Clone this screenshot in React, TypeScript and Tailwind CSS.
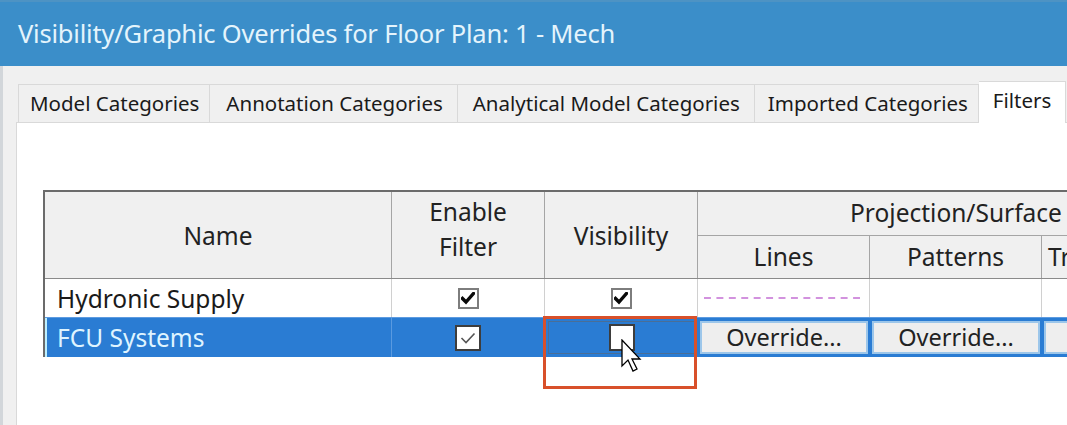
import React from "react";

function Check({ bold }: { bold?: boolean }) {
  if (bold) {
    return (
      <svg width="14" height="13" viewBox="0 0 14 13">
        <path d="M1.5 6.5 L5 10 L12.5 1.5" fill="none" stroke="#0a0a0a" strokeWidth="3.4" strokeLinejoin="miter" strokeLinecap="square" />
      </svg>
    );
  }
  return (
    <svg width="16" height="12" viewBox="0 0 16 12">
      <path d="M1.5 6 L6 10.5 L14.5 1.5" fill="none" stroke="#555" strokeWidth="1.6" />
    </svg>
  );
}

function SmallBox() {
  return (
    <div className="w-[21px] h-[21px] border-2 border-[#7d7d7d] bg-white flex items-center justify-center">
      <Check bold />
    </div>
  );
}

export default function App() {
  return (
    <div className="relative w-[1067px] h-[425px] overflow-hidden bg-[#f0f0f0] font-['Noto_Sans',sans-serif] text-[#1a1a1a]">
      {/* Title bar */}
      <div className="h-[66px] bg-[#3b8ec9] border-t-2 border-[#4d93c4] flex items-center pl-[18px] pb-[2px] text-[25.5px] text-[#e4f4fc] tracking-[-0.2px] whitespace-nowrap">
        Visibility/Graphic Overrides for Floor Plan: 1 - Mech
      </div>

      {/* Body */}
      <div className="border-l-[3px] border-[#d2d6da] h-[359px] pl-[13px] pt-[15px]">
        {/* Tabs */}
        <div className="flex items-end h-[41px] pl-[2px] text-[20.5px] whitespace-nowrap">
          <div className="h-[38px] pl-[11px] pr-[10px] flex items-center bg-[#f0f0f0] border border-b-0 border-[#d9d9d9]">Model Categories</div>
          <div className="h-[38px] pl-[16px] pr-[14px] flex items-center bg-[#f0f0f0] border border-l-0 border-b-0 border-[#d9d9d9]">Annotation Categories</div>
          <div className="h-[38px] pl-[15px] pr-[14px] flex items-center bg-[#f0f0f0] border border-l-0 border-b-0 border-[#d9d9d9]">Analytical Model Categories</div>
          <div className="h-[38px] pl-[13px] pr-[10px] flex items-center bg-[#f0f0f0] border border-l-0 border-b-0 border-[#d9d9d9]">Imported Categories</div>
          <div className="h-[42px] -mb-px relative z-10 px-[14px] pb-[4px] flex items-center bg-white border border-l-0 border-b-0 border-[#d9d9d9]">Filters</div>
        </div>

        {/* Panel */}
        <div className="bg-white border-l border-t border-[#d9d9d9] h-[320px] pl-[26px] pt-[67px]">
          <div className="w-max border-l-2 border-t-2 border-[#6b6b6b] text-[24.5px] whitespace-nowrap">
            {/* Header */}
            <div className="flex h-[87px] bg-[#f0f0f0] border-b border-[#8a8a8a] text-[#222]">
              <div className="w-[347px] border-r border-[#a5a5a5] flex items-center justify-center pt-[3px]">Name</div>
              <div className="w-[153px] border-r border-[#a5a5a5] flex flex-col items-center justify-center leading-[35px] pb-[12px]">
                <span>Enable</span>
                <span>Filter</span>
              </div>
              <div className="w-[153px] border-r border-[#a5a5a5] flex items-center justify-center pt-[3px]">Visibility</div>
              <div className="flex flex-col w-[516px]">
                <div className="h-[44px] border-b border-[#a5a5a5] flex items-center justify-center">Projection/Surface</div>
                <div className="flex flex-1">
                  <div className="w-[172px] border-r border-[#a5a5a5] flex items-center justify-center">Lines</div>
                  <div className="w-[172px] border-r border-[#a5a5a5] flex items-center justify-center">Patterns</div>
                  <div className="w-[172px] flex items-center pl-[6px]">Transparency</div>
                </div>
              </div>
            </div>

            {/* Row 1 */}
            <div className="flex h-[38px] bg-white">
              <div className="w-[347px] border-r border-[#d0d0d0] flex items-center pl-[12px] pt-[2px]">Hydronic Supply</div>
              <div className="w-[153px] border-r border-[#d0d0d0] flex items-center justify-center">
                <SmallBox />
              </div>
              <div className="w-[153px] border-r border-[#d0d0d0] flex items-center justify-center">
                <SmallBox />
              </div>
              <div className="w-[172px] border-r border-[#d0d0d0] flex items-center px-[4px]">
                <svg width="164" height="4" viewBox="0 0 164 4">
                  <line x1="2" y1="2" x2="164" y2="2" stroke="#c46fd3" strokeWidth="1.6" strokeDasharray="7 5.5" />
                </svg>
              </div>
              <div className="w-[172px] border-r border-[#d0d0d0]" />
              <div className="w-[172px]" />
            </div>

            {/* Row 2 selected */}
            <div className="flex h-[40px] bg-[#2a7cd3] border-t border-[#5d9be0] text-[#dff4ff]">
              <div className="w-[347px] border-l-2 border-[#bdf0ff] border-r border-r-[#5a9ae0] flex items-center pl-[10px] pt-[2px]">FCU Systems</div>
              <div className="w-[153px] border-r border-[#5a9ae0] flex items-center justify-center">
                <div className="w-[26px] h-[26px] border-2 border-[#3d3d3d] bg-white flex items-center justify-center">
                  <Check />
                </div>
              </div>
              <div className="w-[153px] p-[3px] flex">
                <div className="flex-1 border border-[#4a6e96] bg-[#2a7cd3] flex items-center justify-center">
                  <div className="w-[26px] h-[27px] border-2 border-[#3d3d3d] bg-white" />
                </div>
              </div>
              <div className="w-[172px] px-[2px] py-[3px] flex">
                <div className="flex-1 bg-[#eeeeee] border-2 border-[#9cc6ea] flex items-center justify-center text-[#222] text-[23.5px]">Override...</div>
              </div>
              <div className="w-[172px] px-[2px] py-[3px] flex">
                <div className="flex-1 bg-[#eeeeee] border-2 border-[#9cc6ea] flex items-center justify-center text-[#222] text-[23.5px]">Override...</div>
              </div>
              <div className="w-[172px] px-[2px] py-[3px] flex">
                <div className="flex-1 bg-[#eeeeee] border-2 border-[#9cc6ea] flex items-center justify-center text-[#222] text-[23.5px]">Override...</div>
              </div>
            </div>
          </div>
        </div>
      </div>

      {/* Red highlight box */}
      <div className="absolute left-[543px] top-[316px] w-[154px] h-[73px] border-[3px] border-[#d8502a] pointer-events-none" />

      {/* Mouse cursor */}
      <svg className="absolute left-[621px] top-[339px]" width="24" height="36" viewBox="0 0 24 36">
        <path d="M1 1 L1 27 L7 21 L12 32 L16 30 L11 20 L19 20 Z" fill="#ffffff" stroke="#000" strokeWidth="1.3" strokeLinejoin="miter" />
      </svg>
    </div>
  );
}
